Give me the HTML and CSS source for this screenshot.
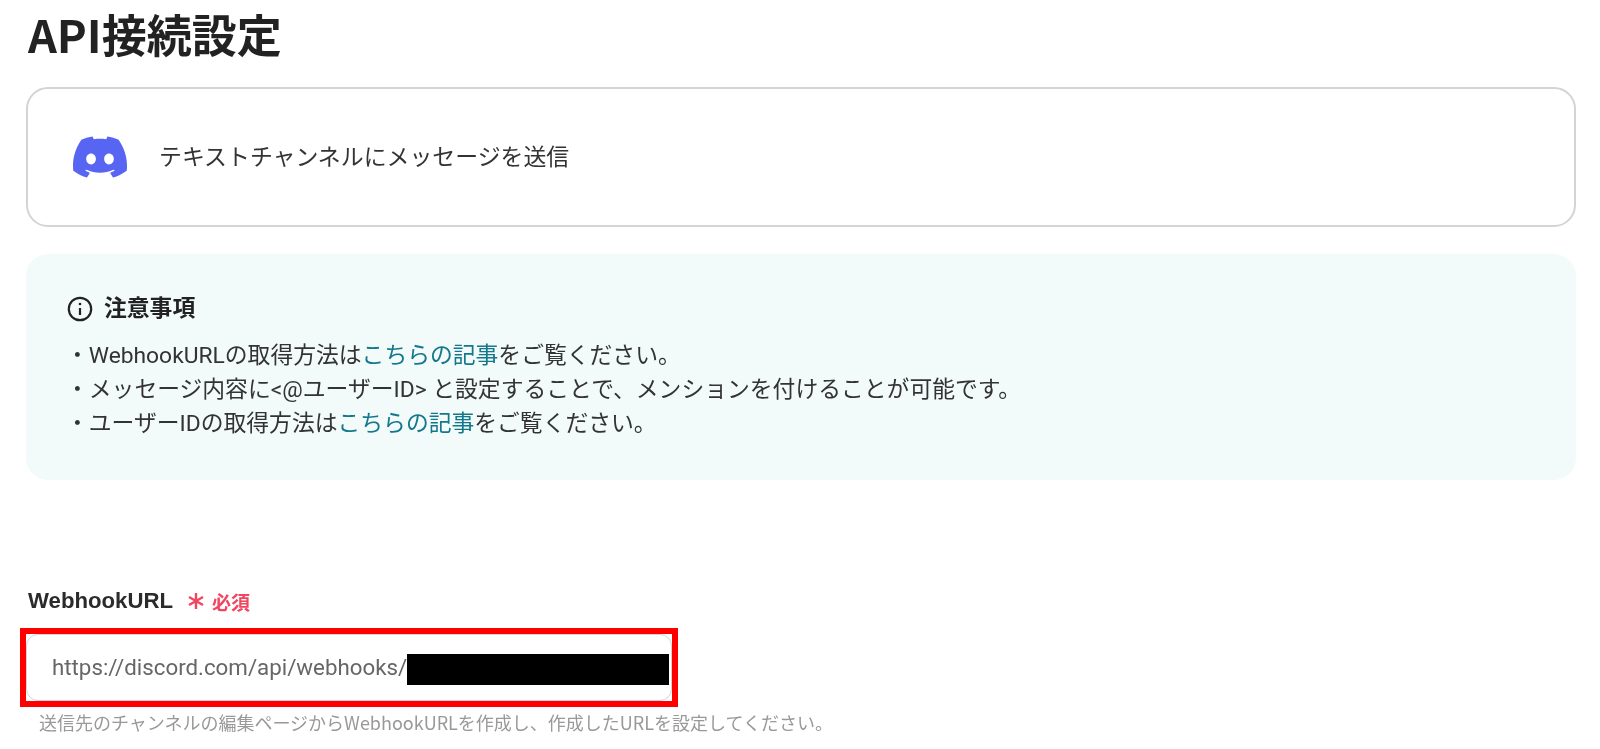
FILE: index.html
```html
<!DOCTYPE html>
<html lang="ja">
<head>
    <meta charset="UTF-8">
    <title>API接続設定</title>
    <link rel="stylesheet" href="styles.css">
</head>
<body>
    <h1 class="title">API接続設定</h1>

    <div class="action-card">
        <svg class="discord-icon" viewBox="0 0 24 24"><path d="M20.317 4.3698a19.7913 19.7913 0 00-4.8851-1.5152.0741.0741 0 00-.0785.0371c-.211.3753-.4447.8648-.6083 1.2495-1.8447-.2762-3.68-.2762-5.4868 0-.1636-.3933-.4058-.8742-.6177-1.2495a.077.077 0 00-.0785-.037 19.7363 19.7363 0 00-4.8852 1.515.0699.0699 0 00-.0321.0277C.5334 9.0458-.319 13.5799.0992 18.0578a.0824.0824 0 00.0312.0561c2.0528 1.5076 4.0413 2.4228 5.9929 3.0294a.0777.0777 0 00.0842-.0276c.4616-.6304.8731-1.2952 1.226-1.9942a.076.076 0 00-.0416-.1057c-.6528-.2476-1.2743-.5495-1.8722-.8923a.077.077 0 01-.0076-.1277c.1258-.0943.2517-.1923.3718-.2914a.0743.0743 0 01.0776-.0105c3.9278 1.7933 8.18 1.7933 12.0614 0a.0739.0739 0 01.0785.0095c.1202.099.246.1981.3728.2924a.077.077 0 01-.0066.1276 12.2986 12.2986 0 01-1.873.8914.0766.0766 0 00-.0407.1067c.3604.698.7719 1.3628 1.225 1.9932a.076.076 0 00.0842.0286c1.961-.6067 3.9495-1.5219 6.0023-3.0294a.077.077 0 00.0313-.0552c.5004-5.177-.8382-9.6739-3.5485-13.6604a.061.061 0 00-.0312-.0286zM8.02 15.3312c-1.1825 0-2.1569-1.0857-2.1569-2.419 0-1.3332.9555-2.4189 2.157-2.4189 1.2108 0 2.1757 1.0952 2.1568 2.419 0 1.3332-.9555 2.4189-2.1569 2.4189zm7.9748 0c-1.1825 0-2.1569-1.0857-2.1569-2.419 0-1.3332.9554-2.4189 2.1569-2.4189 1.2108 0 2.1757 1.0952 2.1568 2.419 0 1.3332-.946 2.4189-2.1568 2.4189Z"/></svg>
        <span class="action-name">テキストチャンネルにメッセージを送信</span>
    </div>

    <div class="notice">
        <div class="notice-head">
            <svg class="info-icon" viewBox="0 0 26 26"><circle cx="13" cy="13" r="11.2"/><path d="M13 12v7"/><circle class="info-dot" cx="13" cy="8" r="1.3"/></svg>
            <span>注意事項</span>
        </div>
        <p>・WebhookURLの取得方法は<a href="#">こちらの記事</a>をご覧ください。</p>
        <p>・メッセージ内容に&lt;@ユーザーID&gt; と設定することで、メンションを付けることが可能です。</p>
        <p>・ユーザーIDの取得方法は<a href="#">こちらの記事</a>をご覧ください。</p>
    </div>

    <div class="field-label">
        <span class="field-name">WebhookURL</span>
        <span class="required">
            <svg class="asterisk" viewBox="0 0 18 18"><path d="M9 1v16M2 5l14 8M16 5L2 13"/></svg>
            必須
        </span>
    </div>
    <div class="highlight-box">
        <div class="url-input">
            <span>https://discord.com/api/webhooks/</span>
            <span class="redacted"></span>
        </div>
    </div>
    <div class="hint">送信先のチャンネルの編集ページからWebhookURLを作成し、作成したURLを設定してください。</div>
</body>
</html>
```

FILE: styles.css
```css
* {
    margin: 0;
    padding: 0;
    box-sizing: border-box;
}

body {
    width: 1600px;
    height: 749px;
    overflow: hidden;
    padding: 0 24px 0 26px;
    background: #fff;
    color: #2b2b2b;
    font-family: "Noto Sans CJK JP", "Noto Sans", sans-serif;
    filter: blur(0.6px);
}

.title {
    height: 87px;
    padding-top: 5px;
    padding-left: 2px;
    font-size: 45px;
    line-height: 58px;
    font-weight: 700;
    color: #222;
}

.action-card {
    display: flex;
    align-items: center;
    height: 140px;
    padding-left: 45px;
    border: 2px solid #d4d4d4;
    border-radius: 22px;
}

.discord-icon {
    width: 54px;
    height: 54px;
    fill: #5865f2;
    margin-right: 32px;
}

.action-name {
    padding-bottom: 4px;
    font-size: 22.9px;
    color: #333;
}

.notice {
    height: 226px;
    margin-top: 27px;
    padding: 38px 40px 0;
    border-radius: 22px;
    background: #f2fafa;
    font-family: Roboto, "Noto Sans CJK JP", sans-serif;
    font-size: 22.8px;
    line-height: 34px;
    color: #333;
}

.notice-head {
    display: flex;
    align-items: center;
    gap: 11px;
    margin-bottom: 13px;
    margin-left: 1px;
    font-weight: 700;
    color: #222;
}

.info-icon {
    width: 26px;
    height: 26px;
    fill: none;
    stroke: #222;
    stroke-width: 2.2;
}

.info-dot {
    fill: #222;
    stroke: none;
}

.notice a {
    color: #14788c;
    text-decoration: none;
}

.field-label {
    display: flex;
    align-items: center;
    height: 40px;
    margin-top: 101px;
    padding-left: 2px;
}

.field-name {
    font-family: "Liberation Sans", sans-serif;
    font-size: 22.2px;
    font-weight: 700;
    color: #2b2b2b;
}

.required {
    display: flex;
    align-items: center;
    margin-left: 14px;
    font-size: 19px;
    font-weight: 700;
    color: #f2455f;
}

.asterisk {
    width: 18px;
    height: 18px;
    margin-right: 7px;
    fill: none;
    stroke: #f2455f;
    stroke-width: 2.4;
}

.highlight-box {
    width: 658px;
    height: 79px;
    margin-top: 7px;
    margin-left: -6px;
    border: 6px solid #ff0000;
}

.url-input {
    display: flex;
    align-items: center;
    height: 100%;
    padding-left: 25px;
    padding-bottom: 1px;
    border: 1px solid #cfd3da;
    border-radius: 12px;
    font-family: Roboto, sans-serif;
    font-size: 22.3px;
    color: #666;
}

.redacted {
    width: 262px;
    height: 31px;
    margin-top: 4px;
    background: #000;
}

.hint {
    margin-top: 2px;
    margin-left: 13px;
    font-size: 18px;
    line-height: 26px;
    color: #999;
}
```
